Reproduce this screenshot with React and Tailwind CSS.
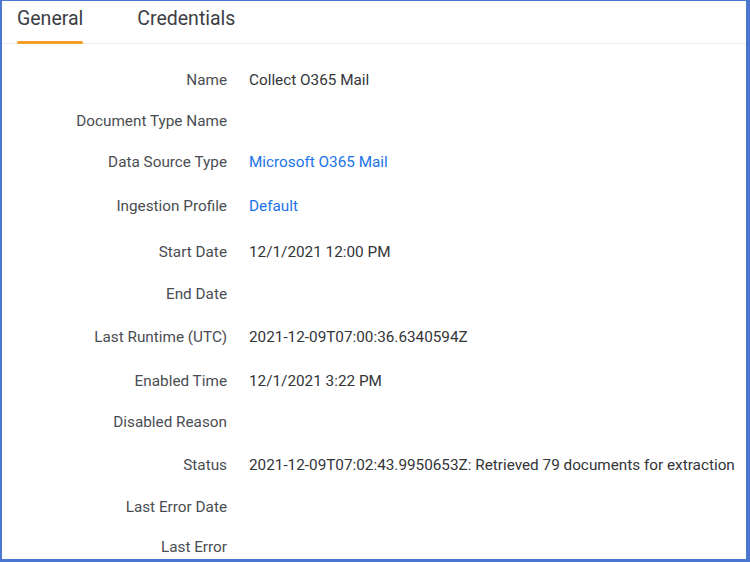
const rows = [
    { label: 'Name', value: 'Collect O365 Mail', h: 'h-[41px]' },
    { label: 'Document Type Name', value: '', h: 'h-[40px]' },
    { label: 'Data Source Type', value: 'Microsoft O365 Mail', link: true, h: 'h-[42px]' },
    { label: 'Ingestion Profile', value: 'Default', link: true, h: 'h-[47px]' },
    { label: 'Start Date', value: '12/1/2021 12:00 PM', h: 'h-[44px]' },
    { label: 'End Date', value: '', h: 'h-[40px]' },
    { label: 'Last Runtime (UTC)', value: '2021-12-09T07:00:36.6340594Z', h: 'h-[47px]' },
    { label: 'Enabled Time', value: '12/1/2021 3:22 PM', h: 'h-[40px]' },
    { label: 'Disabled Reason', value: '', h: 'h-[42px]' },
    { label: 'Status', value: '2021-12-09T07:02:43.9950653Z: Retrieved 79 documents for extraction', h: 'h-[44px]' },
    { label: 'Last Error Date', value: '', h: 'h-[40px]' },
    { label: 'Last Error', value: '', h: 'h-[41px]' },
];

const App = () => {
    return (
        <div className="w-[750px] h-[562px] overflow-hidden bg-white border-l-2 border-t border-r-4 border-b-[3px] border-[#4a76cf] font-['Roboto',sans-serif]">
            {/* Tabs */}
            <div className="flex items-end h-[43px] pl-[15px] gap-[54px] border-b border-[#e9edf2]">
                <div className="relative h-full flex items-start pt-[3px] text-[19.5px] text-[#3c4045]">
                    General
                    <span className="absolute left-0 right-0 bottom-[-1px] h-[3px] bg-[#f49d2a] rounded-sm" />
                </div>
                <div className="h-full flex items-start pt-[3px] text-[19.5px] text-[#3c4045]">Credentials</div>
            </div>

            {/* Fields */}
            <div className="pt-[16px]">
                {rows.map((row) => (
                    <div key={row.label} className={`flex items-center ${row.h} text-[15.3px]`}>
                        <div className="w-[225px] text-right text-[#4a4d52]">{row.label}</div>
                        <div className={`ml-[22px] whitespace-nowrap ${row.link ? 'text-[#1a73e8]' : 'text-[#333539]'}`}>
                            {row.value}
                        </div>
                    </div>
                ))}
            </div>
        </div>
    );
};

export default App;
